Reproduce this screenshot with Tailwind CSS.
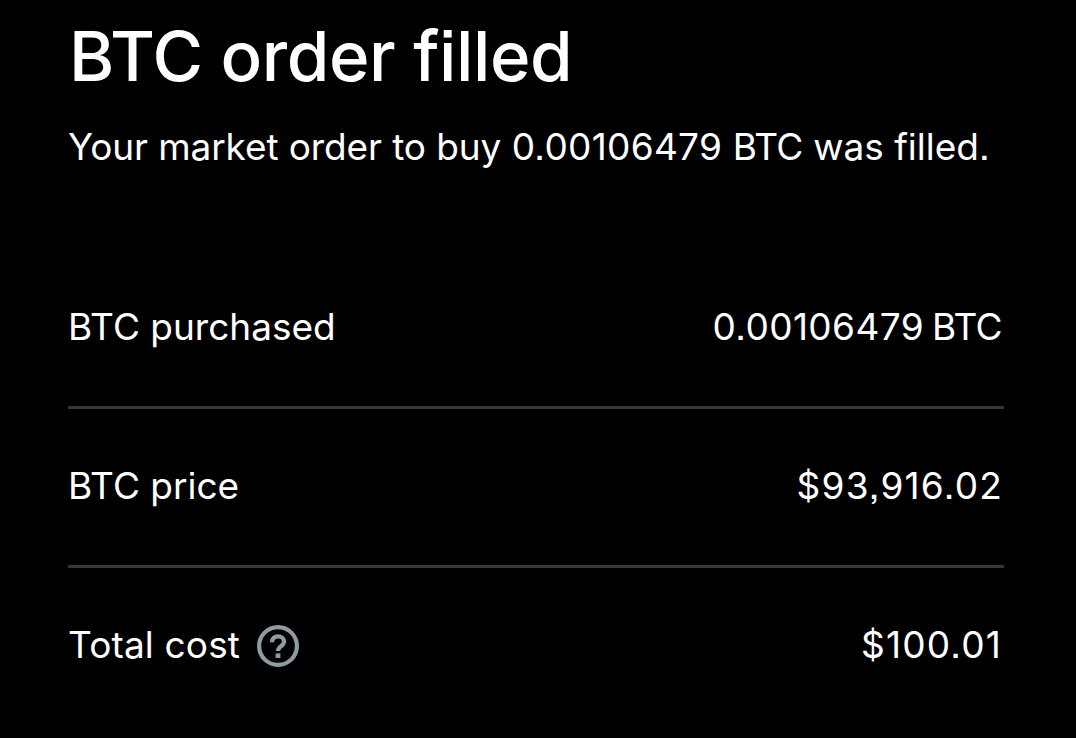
<!DOCTYPE html>
<html lang="en">
<head>
    <meta charset="UTF-8">
    <meta name="viewport" content="width=device-width, initial-scale=1.0">
    <title>BTC order filled</title>
    <script src="https://cdn.jsdelivr.net/npm/@tailwindcss/browser@4"></script>
</head>
<body class="bg-black text-white font-['Inter','Liberation_Sans',sans-serif] [font-feature-settings:'ss07'] overflow-hidden">
    <main class="h-screen pl-[68px] pr-[72px] pt-[11px] text-[37px] leading-[48px] whitespace-nowrap">
        <h1 class="pl-px text-[69px] leading-[90px] font-medium tracking-[-0.45px]">BTC order filled</h1>
        <p class="mt-[22px]"><span class="tracking-[-0.1px]">Your market order to buy</span> <span class="tracking-[0.3px]">0.00106479</span> <span class="tracking-[-0.6px]">BTC</span> was filled.</p>

        <div class="mt-[77px]">
            <div class="flex items-center justify-between h-[161px] pb-px border-b-3 border-[#34373a]">
                <span>BTC purchased</span>
                <span class="pr-[2px] tracking-[0.4px] [word-spacing:-3px]">0.00106479 <span class="tracking-[-0.6px]">BTC</span></span>
            </div>
            <div class="flex items-center justify-between h-[159px] pb-[3px] border-b-3 border-[#34373a]">
                <span>BTC price</span>
                <span class="pr-px tracking-[1.2px]">$93,916.02</span>
            </div>
            <div class="flex items-center justify-between h-[156px]">
                <div class="flex items-center gap-[17px]">
                    <span class="pb-[3px] tracking-[0.15px]">Total cost</span>
                    <svg class="size-[42px]" viewBox="0 0 42 42" fill="none" stroke="#8f9ba3" stroke-width="4.200">
                        <circle cx="21" cy="21" r="18.900"/>
                        <path d="M15 17.200c0-3.700 2.500-5.900 6-5.900s6 2.200 6 5.400c0 4.300-6 4.800-6 9.300"/>
                        <path d="M21 28.400v4.600" stroke-width="4.800"/>
                    </svg>
                </div>
                <span class="pr-[2px] pb-[3px] tracking-[1.2px]">$100.01</span>
            </div>
        </div>
    </main>
</body>
</html>
